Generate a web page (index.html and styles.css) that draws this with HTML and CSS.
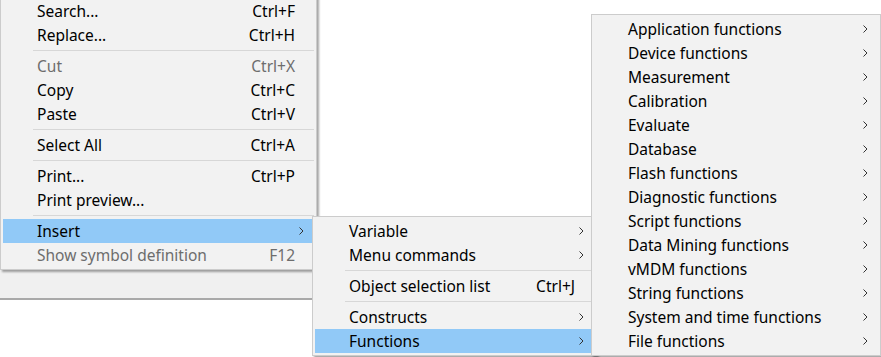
FILE: index.html
```html
<!DOCTYPE html>
<html lang="en">
<head>
    <meta charset="UTF-8">
    <title>Context menu</title>
    <link rel="stylesheet" href="styles.css">
</head>
<body>

    <div class="backdrop"></div>

    <!-- main context menu (top is cut off) -->
    <div class="menu menu-main">
        <div class="item"><span class="label">Search...</span><span class="key">Ctrl+F</span></div>
        <div class="item"><span class="label">Replace...</span><span class="key">Ctrl+H</span></div>
        <div class="sep"></div>
        <div class="item disabled"><span class="label">Cut</span><span class="key">Ctrl+X</span></div>
        <div class="item"><span class="label">Copy</span><span class="key">Ctrl+C</span></div>
        <div class="item"><span class="label">Paste</span><span class="key">Ctrl+V</span></div>
        <div class="sep"></div>
        <div class="item"><span class="label">Select All</span><span class="key">Ctrl+A</span></div>
        <div class="sep"></div>
        <div class="item"><span class="label">Print...</span><span class="key">Ctrl+P</span></div>
        <div class="item"><span class="label">Print preview...</span></div>
        <div class="sep"></div>
        <div class="item active sub"><span class="label">Insert</span></div>
        <div class="item disabled"><span class="label">Show symbol definition</span><span class="key">F12</span></div>
    </div>

    <!-- Insert submenu -->
    <div class="menu menu-insert">
        <div class="item sub"><span class="label">Variable</span></div>
        <div class="item sub"><span class="label">Menu commands</span></div>
        <div class="sep"></div>
        <div class="item"><span class="label">Object selection list</span><span class="key">Ctrl+J</span></div>
        <div class="sep"></div>
        <div class="item sub"><span class="label">Constructs</span></div>
        <div class="item active sub"><span class="label">Functions</span></div>
    </div>

    <!-- Functions submenu -->
    <div class="menu menu-functions">
        <div class="item sub"><span class="label">Application functions</span></div>
        <div class="item sub"><span class="label">Device functions</span></div>
        <div class="item sub"><span class="label">Measurement</span></div>
        <div class="item sub"><span class="label">Calibration</span></div>
        <div class="item sub"><span class="label">Evaluate</span></div>
        <div class="item sub"><span class="label">Database</span></div>
        <div class="item sub"><span class="label">Flash functions</span></div>
        <div class="item sub"><span class="label">Diagnostic functions</span></div>
        <div class="item sub"><span class="label">Script functions</span></div>
        <div class="item sub"><span class="label">Data Mining functions</span></div>
        <div class="item sub"><span class="label">vMDM functions</span></div>
        <div class="item sub"><span class="label">String functions</span></div>
        <div class="item sub"><span class="label">System and time functions</span></div>
        <div class="item sub"><span class="label">File functions</span></div>
    </div>

</body>
</html>
```

FILE: styles.css
```css
body {
    margin: 0;
    background: #ffffff;
    font-family: 'Noto Sans', 'Noto Sans CJK SC', sans-serif;
    font-size: 15.5px;
    color: #000000;
    width: 881px;
    height: 357px;
    overflow: hidden;
    position: relative;
}
.backdrop {
    margin-top: 270px;
    width: 330px;
    height: 28px;
    background: #f0f0f0;
    border-bottom: 2px solid #a9a9a9;
}
.menu {
    position: absolute;
    background: #f2f2f2;
    border: 1px solid #cccccc;
    padding: 2px;
    box-shadow: 2px 2px 2px rgba(0, 0, 0, 0.35);
}
.menu-main {
    left: 0;
    top: -4px;
    width: 311px;
}
.menu-insert {
    left: 312px;
    top: 216px;
    width: 279px;
}
.menu-functions {
    left: 591px;
    top: 14px;
    width: 284px;
}
.item {
    display: flex;
    align-items: center;
    height: 24px;
    padding-left: 34px;
    padding-right: 19px;
    position: relative;
    white-space: nowrap;
}
.item .label {
    flex: 1;
}
.item .key {
    margin-left: 20px;
}
.item.disabled {
    color: #6d6d6d;
}
.item.active {
    background: #91c9f7;
}
.item.sub::after {
    content: "";
    position: absolute;
    right: 10px;
    top: 8px;
    width: 5px;
    height: 8px;
    background: url("data:image/svg+xml;utf8,<svg xmlns='http://www.w3.org/2000/svg' width='5' height='8' viewBox='0 0 5 8'><polyline points='0.5,0.5 4,4 0.5,7.5' fill='none' stroke='%23333' stroke-width='1'/></svg>") no-repeat;
}
.sep {
    height: 1px;
    margin: 3px 0 3px 30px;
    background: #d7d7d7;
}
```
